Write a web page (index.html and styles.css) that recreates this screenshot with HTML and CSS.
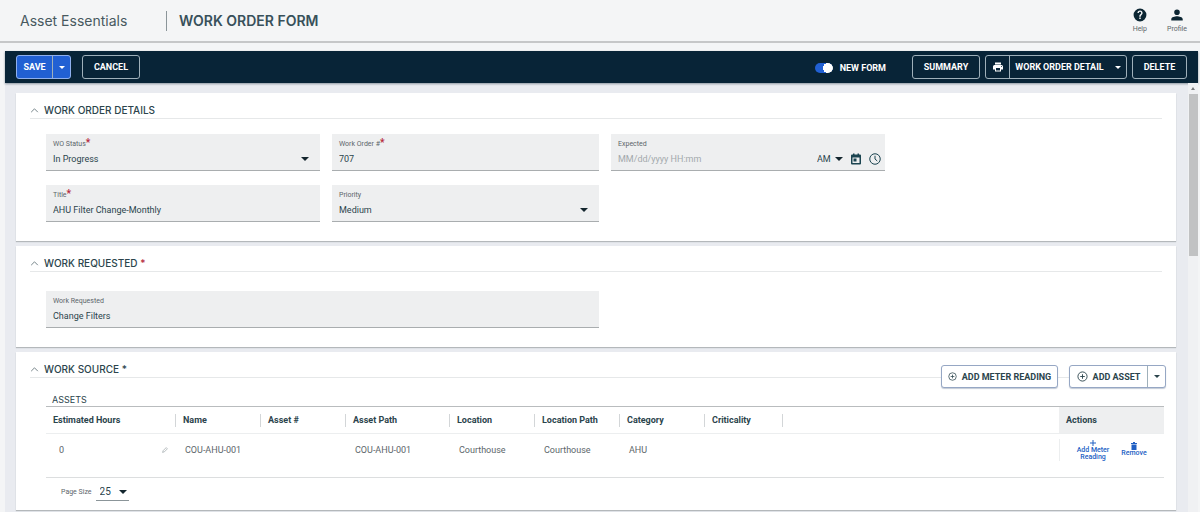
FILE: index.html
```html
<!DOCTYPE html>
<html lang="en">
<head>
  <meta charset="UTF-8">
  <meta name="viewport" content="width=device-width, initial-scale=1.0">
  <title>Work Order Form</title>
  <link rel="stylesheet" href="styles.css">
</head>
<body>
  <header class="topbar">
    <span class="brand">Asset Essentials</span>
    <h1 class="page-title">WORK ORDER FORM</h1>
    <nav class="topbar-links">
      <a href="#help" class="top-link">
        <svg class="top-icon" viewBox="0 0 24 24"><path d="M12 1a11 11 0 1 0 0 22 11 11 0 0 0 0-22zm1.300 18h-2.600v-2.600h2.600zm2.400-8.200-1 1.100c-.9.900-1.400 1.600-1.400 3.100h-2.600v-.6c0-1.200.5-2.300 1.300-3.100l1.400-1.400c.4-.4.600-.9.600-1.400a2 2 0 0 0-4 0H7.600a4.400 4.400 0 0 1 8.800 0c0 .9-.3 1.700-.7 2.300z"/></svg>
        Help
      </a>
      <a href="#profile" class="top-link">
        <svg class="top-icon" viewBox="0 0 24 24"><path d="M12 12a4.800 4.800 0 1 0 0-9.600 4.800 4.800 0 0 0 0 9.600zm0 2.200c-3.400 0-9.800 1.600-9.800 4.800v2.600h19.600V19c0-3.200-6.400-4.800-9.800-4.800z"/></svg>
        Profile
      </a>
    </nav>
  </header>

  <main class="shell">
    <!-- Toolbar -->
    <div class="toolbar">
      <div class="split primary">
        <button type="button" class="btn btn-save">SAVE</button>
        <button type="button" class="btn btn-caret" aria-label="More save options"><span class="caret"></span></button>
      </div>
      <button type="button" class="btn outlined btn-cancel">CANCEL</button>

      <label class="toggle">
        <input type="checkbox" class="toggle-input" checked>
        NEW FORM
      </label>
      <button type="button" class="btn outlined btn-summary">SUMMARY</button>
      <div class="split outlined">
        <button type="button" class="btn btn-print" aria-label="Print">
          <svg class="print-icon" viewBox="0 0 24 24"><path d="M19 8H5a3 3 0 0 0-3 3v6h4v4h12v-4h4v-6a3 3 0 0 0-3-3zm-3 11H8v-5h8zm3-7a1 1 0 1 1 0-2 1 1 0 0 1 0 2zM18 3H6v4h12z"/></svg>
        </button>
        <button type="button" class="btn btn-detail">WORK ORDER DETAIL <span class="caret"></span></button>
      </div>
      <button type="button" class="btn outlined btn-delete">DELETE</button>
    </div>

    <div class="workspace">
      <div class="cards">
        <!-- Work order details -->
        <section class="card">
          <h2 class="card-head">
            <svg class="chevron" viewBox="0 0 10 6"><path d="M1 5l4-4 4 4"/></svg>
            <span>WORK ORDER DETAILS</span>
          </h2>
          <div class="fields">
            <div class="field">
              <label class="field-label" for="status">WO Status<span class="req">*</span></label>
              <div class="field-row">
                <select class="field-value" id="status"><option>In Progress</option></select>
                <span class="caret"></span>
              </div>
            </div>
            <div class="field">
              <label class="field-label" for="number">Work Order #<span class="req">*</span></label>
              <div class="field-row">
                <input class="field-value" id="number" type="text" value="707">
              </div>
            </div>
            <div class="field">
              <label class="field-label" for="expected">Expected</label>
              <div class="field-row date-row">
                <input class="field-value" id="expected" type="text" placeholder="MM/dd/yyyy HH:mm">
                <select class="ampm" aria-label="AM or PM"><option>AM</option><option>PM</option></select>
                <span class="caret"></span>
                <button type="button" class="icon-btn" aria-label="Pick date">
                  <svg class="date-icon" viewBox="0 0 24 24"><path fill-rule="evenodd" d="M20 3h-2V1h-3v2H9V1H6v2H4a2 2 0 0 0-2 2v16a2 2 0 0 0 2 2h16a2 2 0 0 0 2-2V5a2 2 0 0 0-2-2zm-1 17H5V9h14zM7 11h6v6H7z"/></svg>
                </button>
                <button type="button" class="icon-btn" aria-label="Pick time">
                  <svg class="date-icon line-icon" viewBox="0 0 24 24"><circle cx="12" cy="12" r="10.500"/><path d="M12 5.500V12l4.500 4"/></svg>
                </button>
              </div>
            </div>
            <div class="field first-col">
              <label class="field-label" for="title">Title<span class="req">*</span></label>
              <div class="field-row">
                <input class="field-value" id="title" type="text" value="AHU Filter Change-Monthly">
              </div>
            </div>
            <div class="field">
              <label class="field-label" for="priority">Priority</label>
              <div class="field-row">
                <select class="field-value" id="priority"><option>Medium</option></select>
                <span class="caret"></span>
              </div>
            </div>
          </div>
        </section>

        <!-- Work requested -->
        <section class="card">
          <h2 class="card-head">
            <svg class="chevron" viewBox="0 0 10 6"><path d="M1 5l4-4 4 4"/></svg>
            <span>WORK REQUESTED <span class="req">*</span></span>
          </h2>
          <div class="fields">
            <div class="field wide">
              <label class="field-label" for="requested">Work Requested</label>
              <div class="field-row">
                <input class="field-value" id="requested" type="text" value="Change Filters">
              </div>
            </div>
          </div>
        </section>

        <!-- Work source -->
        <section class="card source">
          <h2 class="card-head">
            <svg class="chevron" viewBox="0 0 10 6"><path d="M1 5l4-4 4 4"/></svg>
            <span>WORK SOURCE *</span>
          </h2>
          <div class="source-actions">
            <button type="button" class="btn light btn-meter">
              <svg class="plus-small line-icon" viewBox="0 0 24 24"><circle cx="12" cy="12" r="10"/><path d="M12 7v10M7 12h10"/></svg>
              ADD METER READING
            </button>
            <div class="split light">
              <button type="button" class="btn btn-asset">
                <svg class="plus-big line-icon" viewBox="0 0 24 24"><circle cx="12" cy="12" r="10"/><path d="M12 7v10M7 12h10"/></svg>
                ADD ASSET
              </button>
              <button type="button" class="btn btn-caret" aria-label="More asset options"><span class="caret"></span></button>
            </div>
          </div>

          <div class="assets">
            <h3 class="assets-title">ASSETS</h3>
            <table class="grid">
              <colgroup>
                <col class="col-hours"><col class="col"><col class="col"><col class="col-path">
                <col class="col"><col class="col"><col class="col"><col class="col-crit"><col><col class="col-actions">
              </colgroup>
              <thead>
                <tr>
                  <th><span>Estimated Hours</span></th>
                  <th><span>Name</span></th>
                  <th><span>Asset #</span></th>
                  <th><span>Asset Path</span></th>
                  <th><span>Location</span></th>
                  <th><span>Location Path</span></th>
                  <th><span>Category</span></th>
                  <th><span>Criticality</span></th>
                  <td></td>
                  <th class="actions-head">Actions</th>
                </tr>
              </thead>
              <tbody>
                <tr>
                  <td>
                    <div class="hours">
                      0
                      <svg class="pencil" viewBox="0 0 10 10"><path d="M1 9l1-3 5-5 2 2-5 5z"/></svg>
                    </div>
                  </td>
                  <td>COU-AHU-001</td>
                  <td></td>
                  <td>COU-AHU-001</td>
                  <td>Courthouse</td>
                  <td>Courthouse</td>
                  <td>AHU</td>
                  <td></td>
                  <td></td>
                  <td class="actions-cell">
                    <div class="row-actions">
                      <button type="button" class="row-btn">
                        <svg class="row-icon" viewBox="0 0 8 8"><path d="M3.500 1h1v2.500H7v1H4.500V7h-1V4.500H1v-1h2.500z"/></svg>
                        Add Meter Reading
                      </button>
                      <button type="button" class="row-btn">
                        <svg class="row-icon" viewBox="0 0 8 8"><path d="M1 1h2V0h2v1h2v1H1zM1.500 2.500h5V8h-5z"/></svg>
                        Remove
                      </button>
                    </div>
                  </td>
                </tr>
              </tbody>
            </table>
            <div class="pager">
              <label class="pager-label" for="page-size">Page Size</label>
              <div class="pager-box">
                <select class="pager-select" id="page-size"><option>25</option><option>50</option></select>
                <span class="caret"></span>
              </div>
            </div>
          </div>
        </section>
      </div>

      <div class="scrollbar">
        <span class="scroll-arrow"></span>
        <span class="scroll-thumb"></span>
      </div>
    </div>
  </main>
</body>
</html>
```

FILE: styles.css
```css
* {
  box-sizing: border-box;
}

body {
  margin: 0;
  height: 100vh;
  overflow: hidden;
  display: flex;
  flex-direction: column;
  background: #f4f5f6;
  color: #2b444c;
  font-family: Roboto, "Liberation Sans", sans-serif;
  font-size: 9px;
}

button,
input,
select {
  margin: 0;
  padding: 0;
  border: 0;
  background: none;
  color: inherit;
  font: inherit;
  appearance: none;
}

h1, h2, h3 {
  margin: 0;
  font-family: Inter, sans-serif;
}

/* Small down triangle used by every drop-down */
.caret {
  flex: none;
  width: 0;
  height: 0;
  border: 4px solid transparent;
  border-top-color: currentColor;
  border-bottom: 0;
}

.line-icon {
  fill: none;
  stroke: currentColor;
  stroke-width: 2;
}

/* Header */
.topbar {
  flex: none;
  display: flex;
  align-items: center;
  height: 43px;
  padding: 0 13px 0 20px;
  border-bottom: 2px solid #c6c7c8;
}

.brand {
  width: 146px;
  font-family: Inter, sans-serif;
  font-size: 14px;
  color: #48595f;
}

.page-title {
  padding-left: 12px;
  border-left: 1px solid #8b9599;
  line-height: 20px;
  font-size: 14px;
  font-weight: 600;
  color: #38505a;
}

.topbar-links {
  display: flex;
  gap: 20px;
  margin-left: auto;
}

.top-link {
  display: flex;
  flex-direction: column;
  align-items: center;
  gap: 3px;
  font-size: 7px;
  line-height: 9px;
  color: #5c666a;
  text-decoration: none;
}

.top-icon {
  width: 14px;
  height: 14px;
  fill: #0c2633;
}

/* Toolbar */
.shell {
  flex: 1;
  display: flex;
  flex-direction: column;
  min-height: 0;
  margin: 8px 2px 0 5px;
  background: #e9ebf0;
}

.toolbar {
  flex: none;
  display: flex;
  align-items: center;
  height: 32px;
  padding: 0 11px;
  background: #082437;
  box-shadow: 0 1px 2px #8c96a0;
  color: #fff;
}

.btn {
  display: flex;
  align-items: center;
  justify-content: center;
  height: 22px;
  font-size: 9px;
  font-weight: 700;
  white-space: nowrap;
}

.outlined {
  border: 1px solid #9fb0ba;
  border-radius: 3px;
}

.split {
  display: flex;
  height: 24px;
  border-radius: 3px;
}

.split .btn + .btn {
  border-left: 1px solid #9fb0ba;
}

.toolbar .caret {
  border-width: 3px;
  border-bottom: 0;
}

.primary {
  border: 1px solid #8fb0ee;
  background: #2160d3;
}

.btn-save {
  width: 35px;
}

.btn-caret {
  width: 18px;
}

.outlined.btn {
  height: 24px;
}

.btn-cancel {
  width: 58px;
  margin-left: 11px;
}

.toggle {
  display: flex;
  align-items: center;
  gap: 7px;
  margin: 2px 26px 0 auto;
  font-size: 9px;
  font-weight: 700;
}

.toggle-input {
  width: 18px;
  height: 10px;
  border-radius: 5px;
  background: radial-gradient(circle at 13px 5px, #fff 5px, transparent 5px) #2160d3;
}

.btn-summary {
  width: 68px;
  margin-right: 5px;
}

.btn-print {
  width: 23px;
}

.print-icon {
  width: 12px;
  height: 12px;
  fill: #fff;
}

.btn-detail {
  gap: 11px;
  width: 117px;
}

.btn-delete {
  width: 55px;
  margin-left: 5px;
}

/* Workspace */
.workspace {
  flex: 1;
  display: flex;
  min-height: 0;
}

.cards {
  flex: 1;
  display: flex;
  flex-direction: column;
  gap: 5px;
  padding: 10px 12px 0 11px;
}

.card {
  position: relative;
  padding: 9px 12px 19px 14px;
  background: #fff;
  box-shadow: 0 1px 1px #b4b8bb;
}

.card-head {
  display: flex;
  align-items: center;
  gap: 5px;
  height: 17px;
  margin-right: 2px;
  border-bottom: 1px solid #e6e8e9;
  font-size: 10px;
  font-weight: 500;
}

.chevron {
  width: 9px;
  height: 5px;
  fill: none;
  stroke: #5c6c72;
}

.req {
  color: #b5283c;
}

/* Form fields */
.fields {
  display: grid;
  grid-template-columns: 274fr 267fr 274fr 267fr;
  gap: 14px 12px;
  padding: 15px 0 0 16px;
}

.card + .card .fields {
  padding-top: 19px;
}

.field {
  height: 37px;
  padding: 4px 4px 0 7px;
  border-bottom: 1px solid #a9adaf;
  background: #eeeff0;
}

.first-col {
  grid-column: 1;
}

.wide {
  grid-column: span 2;
}

.field-label {
  display: block;
  height: 12px;
  line-height: 12px;
  font-size: 7px;
  color: #5c666a;
}

.field-label .req {
  font-size: 10px;
  font-weight: 700;
  line-height: 0;
}

.field-row {
  display: flex;
  align-items: center;
  height: 18px;
  padding-right: 7px;
}

.field-row .caret,
.pager .caret {
  color: #14262e;
}

.field-value {
  flex: 1;
  min-width: 0;
}

.field-value::placeholder {
  color: #a3a9ac;
}

.date-row {
  gap: 4px;
  padding-right: 0;
}

.icon-btn {
  display: flex;
  margin-left: 3px;
  color: #1b4450;
}

.date-icon {
  width: 12px;
  height: 12px;
  fill: currentColor;
}

.date-icon.line-icon {
  fill: none;
}

/* Work source */
.source {
  padding-bottom: 4px;
}

.source-actions {
  position: absolute;
  top: 13px;
  right: 10px;
  display: flex;
  gap: 11px;
}

.light {
  height: 23px;
  border: 1px solid #96a7c4;
  border-radius: 3px;
  background: #fff;
  box-shadow: 0 1px 1px #c3cad6;
}

.btn-meter {
  gap: 5px;
  width: 117px;
}

.btn-asset {
  gap: 5px;
  width: 77px;
}

.light .btn {
  height: 21px;
}

.light .caret {
  border-width: 3px;
  border-bottom: 0;
}

.plus-small {
  width: 9px;
  height: 9px;
}

.plus-big {
  width: 11px;
  height: 11px;
}

.assets {
  padding: 15px 0 0 16px;
}

.assets-title {
  height: 13px;
  padding-left: 6px;
  line-height: 13px;
  font-size: 9px;
  font-weight: 400;
}

.grid {
  width: 100%;
  table-layout: fixed;
  border-collapse: collapse;
  border-top: 1px solid #b9bcbe;
  border-bottom: 1px solid #dcdedf;
}

.col-hours {
  width: 130px;
}

.col {
  width: 85px;
}

.col-path {
  width: 104px;
}

.col-crit {
  width: 78px;
}

.col-actions {
  width: 105px;
}

.grid th {
  height: 27px;
  padding: 0;
  font-size: 9px;
  font-weight: 700;
  text-align: left;
}

.grid thead tr {
  border-bottom: 1px solid #eceeef;
}

.grid th span {
  display: block;
  padding-left: 7px;
  border-right: 1px solid #d3d6d8;
  line-height: 13px;
}

.grid .actions-head {
  padding-left: 7px;
  background: #eeeff0;
}

.grid tbody td {
  height: 44px;
  padding: 0 0 12px 9px;
  color: #5c666a;
}

.hours {
  display: flex;
  align-items: center;
  justify-content: space-between;
  padding: 0 8px 0 4px;
}

.pencil {
  width: 6px;
  height: 6px;
  fill: none;
  stroke: #8b9599;
}

.grid tbody .actions-cell {
  padding: 0 0 12px;
}

.row-actions {
  display: flex;
  align-items: center;
  gap: 5px;
  padding-left: 15px;
  border-left: 1px solid #eceeef;
}

.row-btn {
  display: flex;
  flex-direction: column;
  align-items: center;
  width: 36px;
  font-size: 7px;
  font-weight: 500;
  line-height: 7px;
  color: #2160c4;
}

.row-icon {
  width: 8px;
  height: 8px;
  fill: currentColor;
}

.pager {
  display: flex;
  align-items: center;
  gap: 4px;
  height: 28px;
  padding-left: 15px;
}

.pager-label {
  font-size: 7px;
  color: #5c666a;
}

.pager-box {
  display: flex;
  align-items: center;
  width: 33px;
  height: 17px;
  padding: 0 2px 0 4px;
  border-bottom: 1px solid #8b9599;
}

.pager-select {
  flex: 1;
  font-size: 10px;
}

/* Scrollbar */
.scrollbar {
  display: flex;
  flex-direction: column;
  align-items: center;
  width: 10px;
  padding-top: 4px;
  background: #f0f1f3;
}

.scroll-arrow {
  margin-bottom: 4px;
  border: 2px solid transparent;
  border-top: 0;
  border-bottom: 3px solid #77797b;
}

.scroll-thumb {
  width: 9px;
  height: 38%;
  background: #c1c2c3;
}
```
